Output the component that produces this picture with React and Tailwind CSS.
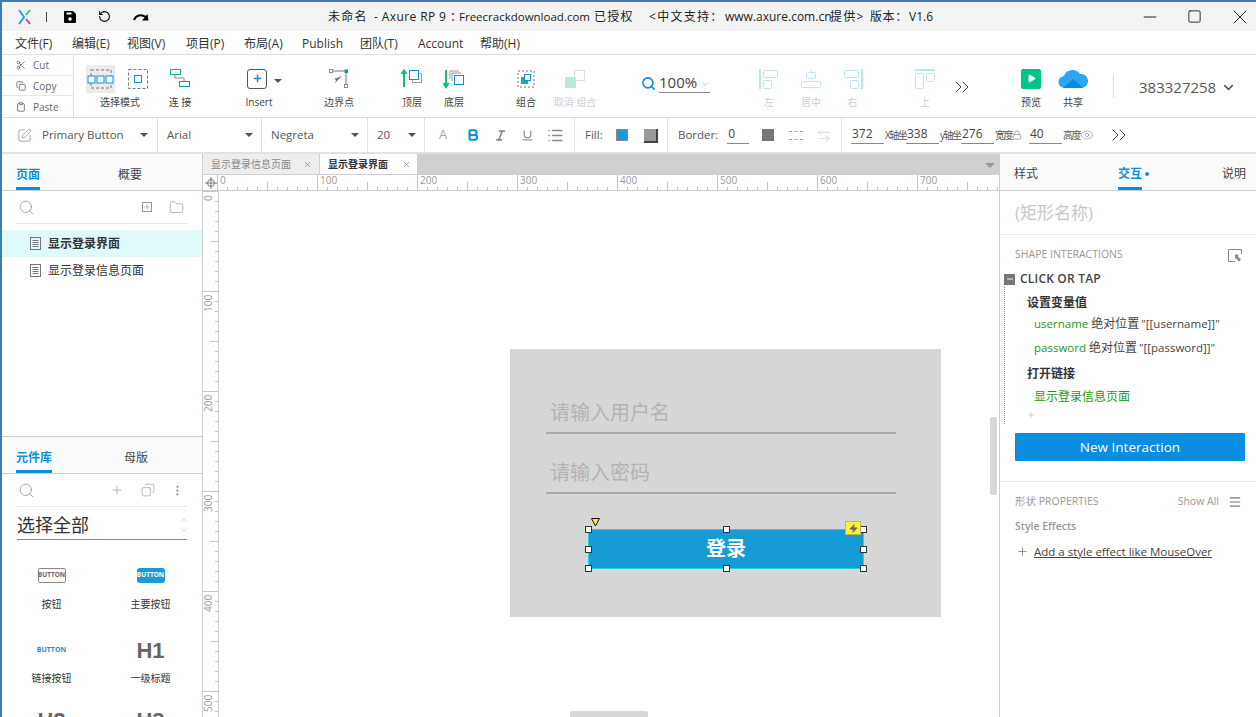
import { Scissors, Copy, Clipboard, Search, Plus, Folder, X, Minus, Square, ChevronDown, ChevronUp, ChevronsRight, RotateCcw, Lock, Eye, Play, EllipsisVertical, Menu, List, Bold, Italic, Underline, Zap, SquarePen } from "lucide-react";

const FONT = "font-['Open_Sans','Noto_Sans_CJK_SC',sans-serif]";

const MENUS = [
  ["文件(F)", "w-[57px]"],
  ["编辑(E)", "w-[55px]"],
  ["视图(V)", "w-[59px]"],
  ["项目(P)", "w-[58px]"],
  ["布局(A)", "w-[58px]"],
  ["Publish", "w-[58px]"],
  ["团队(T)", "w-[58px]"],
  ["Account", "w-[62px]"],
  ["帮助(H)", "w-[60px]"],
];

const TICKS = [0, 1, 2, 3, 4, 5, 6, 7, 8, 9];

function Caret({ className = "" }) {
  return <span className={`w-0 h-0 border-x-[4px] border-x-transparent border-t-[4px] border-t-[#555] ${className}`} />;
}

function ToolButton({ label, width, muted, children }) {
  return (
    <div className={`flex flex-col items-center shrink-0 ${width}`}>
      <div className="h-[31px] flex items-center justify-center">{children}</div>
      <div className={`mt-[1px] text-[10px] leading-[14px] whitespace-nowrap ${muted ? "text-[#d0d0d0]" : "text-[#444]"}`}>{label}</div>
    </div>
  );
}

function Underlined({ value, width }) {
  return <div className={`h-[18px] border-b border-[#888] text-[12px] leading-[16px] text-[#444] px-[1px] shrink-0 ${width}`}>{value}</div>;
}

function AxisLabel({ label, width }) {
  return <span className={`text-[10px] tracking-[-1.5px] whitespace-nowrap pl-[1px] shrink-0 ${width}`}>{label}</span>;
}

function Select({ label, width }) {
  return (
    <div className={`h-full flex items-center justify-between border-r border-[#e3e3e3] pl-[9px] pr-[8px] text-[11.5px] text-[#555] shrink-0 ${width}`}>
      <span>{label}</span>
      <Caret />
    </div>
  );
}

function PanelTabs({ tabs }) {
  return (
    <div className="h-[37px] flex items-stretch bg-[#fbfbfb] border-b border-[#cfcfcf] shrink-0">
      {tabs.map(([label, width, active]) => (
        <div key={label} className={`${width} flex items-stretch`}>
          <div className={`h-full pt-[12px] text-[12px] leading-[18px] whitespace-nowrap ${active ? "text-[#0b8ede] border-b-[3px] border-[#0b8ede] font-semibold" : "text-[#444]"}`}>{label}</div>
        </div>
      ))}
    </div>
  );
}

function DocIcon() {
  return (
    <svg width="11" height="13" viewBox="0 0 11 13" className="shrink-0">
      <rect x="0.5" y="0.5" width="10" height="12" fill="none" stroke="#777" />
      <path d="M2.5 3.5h6M2.5 5.5h6M2.5 7.5h6M2.5 9.5h6" stroke="#777" />
    </svg>
  );
}

function PageRow({ label, active }) {
  return (
    <div className={`h-[27px] flex items-center pl-[28px] gap-[7px] text-[12px] text-[#333] ${active ? "bg-[#e0f9f9] font-bold" : ""}`}>
      <DocIcon />
      <span>{label}</span>
    </div>
  );
}

function Widget({ label, children }) {
  return (
    <div className="h-[74px] flex flex-col items-center">
      <div className="h-[32px] flex items-center justify-center">{children}</div>
      {label && <div className="mt-[6px] text-[10px] leading-[14px] text-[#333]">{label}</div>}
    </div>
  );
}

function HorizontalRuler() {
  const marks = [0, 100, 200, 300, 400, 500, 600, 700];
  return (
    <div className="h-[16px] flex-1 flex overflow-hidden bg-white border-b border-[#cfcfcf] -ml-[2px]">
      {marks.map((m) => (
        <div key={m} className="relative w-[100px] shrink-0 h-full border-l border-[#c4c4c4] pl-[2px] text-[10px] leading-[11px] text-[#999]">
          {m}
          <div className="absolute inset-0 flex items-end">
            {TICKS.map((t) => (
              <span key={t} className={`w-[10px] shrink-0 border-r border-[#c4c4c4] ${t === 4 ? "h-[8px]" : "h-[3px]"}`} />
            ))}
          </div>
        </div>
      ))}
    </div>
  );
}

function VerticalRuler() {
  const marks = [0, 100, 200, 300, 400, 500];
  return (
    <div className="w-[16px] shrink-0 h-full overflow-hidden bg-white border-r border-[#cfcfcf] flex flex-col">
      {marks.map((m) => (
        <div key={m} className="relative h-[100px] shrink-0 border-t border-[#c4c4c4]">
          <div className="mt-[3px] h-[24px] text-right text-[10px] leading-[11px] text-[#999] [writing-mode:vertical-rl] rotate-180">{m}</div>
          <div className="absolute inset-0 flex flex-col items-end">
            {TICKS.map((t) => (
              <span key={t} className={`h-[10px] shrink-0 border-b border-[#c4c4c4] ${t === 4 ? "w-[8px]" : "w-[3px]"}`} />
            ))}
          </div>
        </div>
      ))}
    </div>
  );
}

function Handle({ className }) {
  return <span className={`absolute w-[7px] h-[7px] bg-white border border-[#333] ${className}`} />;
}

export default function App() {
  return (
    <div className={`w-[1256px] h-[717px] overflow-hidden bg-white flex flex-col border-l-2 border-t-2 border-[#3d7cb8] ${FONT}`}>
      {/* title bar */}
      <div className="h-[29px] shrink-0 bg-[#f3f3f3] flex items-center text-[12px] text-[#222]">
        <svg width="14" height="16" viewBox="0 0 14 16" className="ml-[16px]">
          <path d="M1 1 L6 8 L1 15" fill="none" stroke="#1aa7e0" strokeWidth="2" />
          <path d="M12 1 L8 6" fill="none" stroke="#35c48f" strokeWidth="2" />
          <path d="M8 10 L12 15" fill="none" stroke="#e8308c" strokeWidth="2" />
        </svg>
        <span className="ml-[14px] w-px h-[10px] bg-[#444]" />
        <svg width="12" height="12" viewBox="0 0 12 12" className="ml-[17px]">
          <path d="M0 1a1 1 0 0 1 1-1h8l3 3v8a1 1 0 0 1-1 1H1a1 1 0 0 1-1-1z" fill="#000" />
          <rect x="2.5" y="1.5" width="5" height="2" fill="#fff" />
          <circle cx="6" cy="8" r="1.8" fill="#fff" />
        </svg>
        <RotateCcw size={13} className="ml-[22px] text-black" strokeWidth={2} />
        <svg width="16" height="11" viewBox="0 0 16 11" className="ml-[22px]">
          <path d="M1 9C3 4 8 3 13 6" fill="none" stroke="#000" strokeWidth="2" />
          <path d="M15.5 9.5L9 9.5 14.5 3z" fill="#000" />
        </svg>
        <div className="ml-[179px] flex whitespace-nowrap">
          <span className="w-[46px] tracking-[1.3px]">未命名</span>
          <span className="w-[85px] tracking-[0.4px]">- Axure RP 9 ：</span>
          <span className="w-[135px] text-[11.5px]">Freecrackdownload.com</span>
          <span className="w-[55px] tracking-[1.3px]">已授权</span>
          <span className="w-[76px] tracking-[1.3px]">&lt;中文支持：</span>
          <span className="w-[105px]">www.axure.com.cn</span>
          <span className="w-[40px] tracking-[1.3px]">提供&gt;</span>
          <span className="w-[39px] tracking-[0.6px]">版本：</span>
          <span>V1.6</span>
        </div>
        <div className="ml-auto mr-[4px] flex items-center text-[#222]">
          <Minus size={20} strokeWidth={1.2} />
          <Square size={15} strokeWidth={1.5} className="ml-[27px]" />
          <X size={24} strokeWidth={1} className="ml-[26px]" />
        </div>
      </div>

      {/* menu */}
      <div className="h-[24px] shrink-0 flex items-center pl-[13px] pt-[2px] text-[12px] text-[#333] border-b border-[#dedede]">
        {MENUS.map(([label, width]) => (
          <span key={label} className={`${width} whitespace-nowrap`}>{label}</span>
        ))}
      </div>

      {/* toolbar */}
      <div className="h-[63px] shrink-0 flex items-stretch border-b border-[#dedede]">
        <div className="w-[72px] shrink-0 border-r border-[#dedede] flex flex-col text-[10px] text-[#666]">
          {[["Cut", Scissors], ["Copy", Copy], ["Paste", Clipboard]].map(([label, Icon], i) => (
            <div key={label} className={`h-[21px] flex items-center pl-[14px] pt-[1px] gap-[7px] ${i < 2 ? "border-b border-[#e6e6e6]" : ""}`}>
              <Icon size={10} />
              <span>{label}</span>
            </div>
          ))}
        </div>
        <div className="flex items-start pt-[8px]">
          <ToolButton label="选择模式" width="w-[92px]">
            <div className="flex items-center gap-[13px] mr-[6px]">
              <div className="w-[29px] h-[28px] bg-[#ececec] flex items-center justify-center">
                <svg width="28" height="20" viewBox="0 0 28 20"><rect x="4" y="1" width="20" height="18" fill="none" stroke="#777" strokeDasharray="3 2"/><rect x="1" y="7" width="7" height="7" fill="#fff" stroke="#0b8ede"/><rect x="10" y="7" width="7" height="7" fill="#fff" stroke="#0b8ede"/><rect x="19" y="7" width="7" height="7" fill="#fff" stroke="#0b8ede"/></svg>
              </div>
              <svg width="20" height="20" viewBox="0 0 20 20"><rect x="0.5" y="0.5" width="19" height="19" fill="none" stroke="#777" strokeDasharray="3 2"/><rect x="6.5" y="6.5" width="7" height="7" fill="#fff" stroke="#0b8ede"/></svg>
            </div>
          </ToolButton>
          <ToolButton label="连 接" width="w-[28px]">
            <svg width="20" height="20" viewBox="0 0 20 20"><rect x="0.5" y="0.5" width="10" height="5" fill="none" stroke="#11b98c"/><rect x="9.5" y="12.5" width="10" height="5" fill="none" stroke="#0b8ede"/><path d="M5 6v3h9v3" fill="none" stroke="#888"/></svg>
          </ToolButton>
          <ToolButton label="Insert" width="w-[130px]">
            <div className="flex items-center gap-[7px] ml-[11px]">
              <div className="w-[20px] h-[20px] border border-[#555] rounded-[3px] flex items-center justify-center"><Plus size={11} strokeWidth={3} className="text-[#0b8ede]" /></div>
              <Caret className="mt-[5px]" />
            </div>
          </ToolButton>
          <ToolButton label="边界点" width="w-[30px]">
            <svg width="20" height="20" viewBox="0 0 20 20"><path d="M3 2H17V17" fill="none" stroke="#777"/><rect x="0.5" y="0.5" width="3" height="3" fill="#fff" stroke="#888"/><rect x="15.5" y="0.5" width="3.5" height="3.5" fill="#0b8ede"/><rect x="15.5" y="15.5" width="3" height="3" fill="#fff" stroke="#888"/><path d="M13 7L5 10l2 1-1 3z" fill="#777"/></svg>
          </ToolButton>
          <ToolButton label="顶层" width="w-[42px] ml-[37px]">
            <svg width="22" height="20" viewBox="0 0 22 20"><path d="M3 18V3M0.5 5L3 1.5 5.5 5" fill="none" stroke="#11b98c" strokeWidth="2"/><rect x="8.5" y="1.5" width="9" height="9" fill="#fff" stroke="#0b8ede"/><path d="M18.5 4.5h2v9h-9v-2" fill="none" stroke="#999"/></svg>
          </ToolButton>
          <ToolButton label="底层" width="w-[42px]">
            <svg width="22" height="20" viewBox="0 0 22 20"><path d="M3 1V16M0.5 14L3 18 5.5 14" fill="none" stroke="#11b98c" strokeWidth="2"/><path d="M7 10V2h9M9 12V4h9" fill="none" stroke="#999"/><rect x="11.5" y="6.5" width="9" height="9" fill="#fff" stroke="#0b8ede"/></svg>
          </ToolButton>
          <ToolButton label="组合" width="w-[40px] ml-[31px]">
            <svg width="20" height="20" viewBox="0 0 20 20"><rect x="2" y="2" width="16" height="16" fill="none" stroke="#777" strokeDasharray="2 2"/><rect x="5" y="8" width="7" height="7" fill="#11b98c"/><rect x="8.5" y="5.5" width="6" height="6" fill="#fff" stroke="#0b8ede"/></svg>
          </ToolButton>
          <ToolButton label="取消 组合" width="w-[58px]" muted>
            <svg width="22" height="20" viewBox="0 0 22 20"><rect x="10.5" y="1.5" width="10" height="10" fill="none" stroke="#ddd"/><rect x="1" y="8" width="11" height="11" fill="#b8ecd8"/></svg>
          </ToolButton>
        </div>
        <div className="flex items-start pt-[17px] ml-[37px]">
          <Search size={15} strokeWidth={2.5} className="text-[#0b8ede] mt-[4px]" />
          <div className="ml-[3px] w-[51px] h-[21px] border-b border-[#888] text-[15px] leading-[19px] text-[#444] flex items-center justify-between">
            <span>100%</span>
            <ChevronDown size={10} className="text-[#bbb] mt-[3px]" />
          </div>
        </div>
        <div className="flex items-start pt-[8px] ml-[38px]">
          <ToolButton label="左" width="w-[42px]" muted>
            <svg width="20" height="20" viewBox="0 0 20 20"><path d="M1 0V20" stroke="#b7eadc" strokeWidth="2"/><rect x="4.5" y="1.5" width="14" height="7" rx="1" fill="none" stroke="#bfe3f7"/><rect x="4.5" y="11.5" width="8" height="8" rx="1" fill="none" stroke="#bfe3f7"/></svg>
          </ToolButton>
          <ToolButton label="居中" width="w-[42px]" muted>
            <svg width="20" height="20" viewBox="0 0 20 20"><path d="M10 0V20" stroke="#b7eadc"/><rect x="5.5" y="3.5" width="9" height="6" rx="1" fill="#fff" stroke="#bfe3f7"/><rect x="0.5" y="12.5" width="19" height="6" rx="1" fill="#fff" stroke="#bfe3f7"/></svg>
          </ToolButton>
          <ToolButton label="右" width="w-[41px]" muted>
            <svg width="20" height="20" viewBox="0 0 20 20"><path d="M19 0V20" stroke="#b7eadc" strokeWidth="2"/><rect x="1.5" y="1.5" width="14" height="7" rx="1" fill="none" stroke="#bfe3f7"/><rect x="7.5" y="11.5" width="8" height="8" rx="1" fill="none" stroke="#bfe3f7"/></svg>
          </ToolButton>
          <ToolButton label="上" width="w-[42px] ml-[31px]" muted>
            <svg width="20" height="20" viewBox="0 0 20 20"><path d="M0 1H20" stroke="#b7eadc" strokeWidth="2"/><rect x="0.5" y="4.5" width="8" height="15" rx="1" fill="none" stroke="#bfe3f7"/><rect x="11.5" y="4.5" width="8" height="8" rx="1" fill="none" stroke="#bfe3f7"/></svg>
          </ToolButton>
          <ChevronsRight size={24} strokeWidth={1} className="text-[#444] mt-[12px] ml-[4px] shrink-0" />
          <ToolButton label="预览" width="w-[42px] ml-[36px]">
            <div className="w-[20px] h-[20px] bg-[#00c389] rounded-[2px] flex items-center justify-center"><Play size={9} fill="white" stroke="white" /></div>
          </ToolButton>
          <ToolButton label="共享" width="w-[42px]">
            <svg width="30" height="20" viewBox="0 0 30 20"><path d="M7 19a6 6 0 0 1-1-12 9 9 0 0 1 16-2 6 6 0 0 1 2 14z" fill="#2aa6f2"/><path d="M5 19l10-9 10 9z" fill="#0a8ae0"/></svg>
          </ToolButton>
          <span className="ml-[19px] mt-[11px] w-px h-[24px] bg-[#dedede] shrink-0" />
          <div className="ml-[25px] mt-[14px] flex items-center text-[15px] leading-[20px] text-[#555] gap-[5px] whitespace-nowrap">
            <span>383327258</span>
            <ChevronDown size={15} strokeWidth={2.5} className="text-[#555]" />
          </div>
        </div>
      </div>

      {/* format bar */}
      <div className="h-[36px] shrink-0 flex items-center border-b-2 border-[#e2e2e2] text-[11.5px] text-[#555]">
        <div className="h-full w-[156px] flex items-center justify-between pl-[15px] pr-[9px] border-r border-[#e3e3e3] shrink-0">
          <SquarePen size={15} strokeWidth={1} className="text-[#777]" />
          <span className="ml-[10px] mr-auto">Primary Button</span>
          <Caret />
        </div>
        <Select label="Arial" width="w-[104px]" />
        <Select label="Negreta" width="w-[106px]" />
        <Select label="20" width="w-[57px]" />
        <div className="h-full w-[150px] shrink-0 flex items-center border-r border-[#e3e3e3] pl-[14px] text-[#aaa]">
          <span className="text-[13px] w-[27px]">A</span>
          <Bold size={14} strokeWidth={3.5} className="text-[#0b8ede]" />
          <Italic size={13} strokeWidth={3} className="ml-[14px] text-[#888]" />
          <Underline size={13} strokeWidth={2.5} className="ml-[14px] text-[#999]" />
          <List size={17} strokeWidth={2} className="ml-[13px] text-[#888]" />
        </div>
        <div className="h-full w-[93px] shrink-0 flex items-center border-r border-[#e3e3e3] pl-[10px]">
          <span>Fill:</span>
          <span className="ml-[13px] w-[12px] h-[12px] bg-[#1a9bd7] border border-[#8a8a8a]" />
          <span className="ml-[16px] w-[12px] h-[12px] bg-[#999] shadow-[1px_1px_0_1px_#444]" />
        </div>
        <div className="h-full w-[174px] shrink-0 flex items-center border-r border-[#e3e3e3] pl-[10px]">
          <span>Border:</span>
          <Underlined value="0" width="ml-[9px] w-[22px]" />
          <span className="ml-[13px] w-[12px] h-[12px] bg-[#777]" />
          <span className="ml-[15px] w-[14px] h-[9px] border-y border-[#aaa] border-dashed" />
          <span className="ml-[14px] text-[#ddd] text-[13px] leading-none">⇆</span>
        </div>
        <div className="flex items-center pl-[9px]">
          <Underlined value="372" width="w-[33px]" />
          <AxisLabel label="X轴坐" width="w-[22px]" />
          <Underlined value="338" width="w-[33px]" />
          <AxisLabel label="y轴坐" width="w-[22px]" />
          <Underlined value="276" width="w-[33px]" />
          <AxisLabel label="宽度" width="w-[18px]" />
          <Lock size={10} className="text-[#999] mr-[7px] shrink-0" />
          <Underlined value="40" width="w-[33px]" />
          <AxisLabel label="高度" width="w-[18px]" />
          <Eye size={14} strokeWidth={1} className="text-[#888] shrink-0" />
          <ChevronsRight size={24} strokeWidth={1} className="ml-[13px] text-[#444] shrink-0" />
        </div>
      </div>

      {/* workspace */}
      <div className="flex-1 min-h-0 flex">
        {/* left */}
        <div className="w-[201px] shrink-0 flex flex-col border-r border-[#cfcfcf]">
          <div className="h-[283px] shrink-0 flex flex-col border-b border-[#cfcfcf]">
            <PanelTabs tabs={[["页面", "w-[116px] pl-[14px]", true], ["概要", "w-[80px]"]]} />
            <div className="h-[33px] mx-[15px] flex items-center border-b border-[#e6e6e6] text-[#888]">
              <Search size={17} strokeWidth={1} className="ml-[1px]" />
              <span className="ml-auto w-[10px] h-[10px] border border-[#999] flex items-center justify-center"><Plus size={8} strokeWidth={1.5} /></span>
              <Folder size={15} strokeWidth={1} className="ml-[17px] mr-[3px]" />
            </div>
            <div className="mt-[6px]">
              <PageRow label="显示登录界面" active />
              <PageRow label="显示登录信息页面" />
            </div>
          </div>
          <div className="flex-1 min-h-0 overflow-hidden">
            <PanelTabs tabs={[["元件库", "w-[122px] pl-[14px]", true], ["母版", "w-[60px]"]]} />
            <div className="h-[33px] mx-[15px] flex items-center border-b border-[#e6e6e6] text-[#888]">
              <Search size={17} strokeWidth={1} className="ml-[1px]" />
              <Plus size={14} strokeWidth={1} className="ml-auto mr-[1px]" />
              <Copy size={14} strokeWidth={1} className="ml-[16px] -scale-x-100" />
              <EllipsisVertical size={13} strokeWidth={2} className="ml-[16px] mr-[3px]" />
            </div>
            <div className="mx-[15px] h-[33px] pt-[4px] flex items-center justify-between border-b border-[#888] text-[18px] text-[#333]">
              <span>选择全部</span>
              <div className="flex flex-col text-[#ccc] mr-[-2px]"><ChevronUp size={10} /><ChevronDown size={10} /></div>
            </div>
            <div className="grid grid-cols-2 mt-[19px] pr-[2px]">
              <Widget label="按钮">
                <div className="w-[28px] h-[15px] border border-[#888] rounded-[2px] text-[6.5px] font-bold text-[#666] flex items-center justify-center">BUTTON</div>
              </Widget>
              <Widget label="主要按钮">
                <div className="w-[28px] h-[15px] bg-[#1a9bd7] rounded-[3px] text-[6.5px] font-bold text-white flex items-center justify-center">BUTTON</div>
              </Widget>
              <Widget label="链接按钮">
                <div className="w-[28px] h-[15px] mt-[2px] text-[7px] font-bold text-[#3a84cc] flex items-center justify-center">BUTTON</div>
              </Widget>
              <Widget label="一级标题">
                <div className="mt-[3px] text-[22px] leading-none font-bold text-[#666] font-['Liberation_Sans',sans-serif]">H1</div>
              </Widget>
              <Widget>
                <div className="-mt-[5px] text-[22px] leading-none font-bold text-[#666] font-['Liberation_Sans',sans-serif]">H2</div>
              </Widget>
              <Widget>
                <div className="-mt-[5px] text-[22px] leading-none font-bold text-[#666] font-['Liberation_Sans',sans-serif]">H3</div>
              </Widget>
            </div>
          </div>
        </div>

        {/* center */}
        <div className="flex-1 min-w-0 flex flex-col">
          <div className="h-[21px] shrink-0 flex bg-[#d0d0d0] border-b border-[#cfcfcf] text-[10px]">
            <div className="w-[117px] flex items-center justify-between pl-[8px] pr-[7px] bg-[#ededed] text-[#888] border-r border-[#cfcfcf]">
              <span>显示登录信息页面</span><X size={9} />
            </div>
            <div className="w-[97px] flex items-center justify-between pl-[8px] pr-[6px] bg-white text-[#333] font-semibold">
              <span>显示登录界面</span><X size={9} className="text-[#888]" />
            </div>
            <span className="ml-auto mr-[4px] mt-[9px] w-0 h-0 border-x-[5px] border-x-transparent border-t-[5px] border-t-[#999]" />
          </div>
          <div className="flex shrink-0">
            <div className="w-[16px] h-[16px] shrink-0 flex items-center justify-center border-r border-b border-[#cfcfcf]">
              <svg width="12" height="12" viewBox="0 0 12 12">
                <circle cx="6" cy="6" r="3.5" fill="none" stroke="#777" />
                <path d="M6 0V12M0 6H12" stroke="#777" />
              </svg>
            </div>
            <HorizontalRuler />
          </div>
          <div className="flex-1 min-h-0 flex">
            <VerticalRuler />
            <div className="relative flex-1 bg-white">
              <div className="absolute left-[291px] top-[158px] w-[431px] h-[268px] bg-[#d6d6d6] font-['Noto_Sans_CJK_SC',sans-serif]">
                <div className="absolute left-[36px] top-[49px] w-[350px] h-[36px] border-b-2 border-[#aaa] pl-[4px] text-[20px] leading-[27px] text-[#b3b3b3]">请输入用户名</div>
                <div className="absolute left-[36px] top-[109px] w-[350px] h-[36px] border-b-2 border-[#aaa] pl-[4px] text-[20px] leading-[27px] text-[#b3b3b3]">请输入密码</div>
                <div className="absolute left-[78px] top-[180px] w-[276px] h-[40px] pb-[2px] bg-[#179bd7] border border-[#1fd3e0] text-white font-bold text-[20px] flex items-center justify-center">
                  登录
                  <Handle className="-left-[4px] -top-[4px]" />
                  <Handle className="left-[134px] -top-[4px]" />
                  <Handle className="-right-[4px] -top-[4px]" />
                  <Handle className="-left-[4px] top-[16px]" />
                  <Handle className="-right-[4px] top-[16px]" />
                  <Handle className="-left-[4px] -bottom-[4px]" />
                  <Handle className="left-[134px] -bottom-[4px]" />
                  <Handle className="-right-[4px] -bottom-[4px]" />
                  <svg width="9" height="9" viewBox="0 0 9 9" className="absolute left-[2px] -top-[12px]">
                    <path d="M0.5 0.5H8.5L4.5 8z" fill="#ffe92e" stroke="#111" />
                  </svg>
                  <span className="absolute right-[2px] -top-[9px] w-[16px] h-[14px] bg-[#fff23a] border border-[#c0b84a] flex items-center justify-center"><Zap size={9} fill="#666" stroke="#666" /></span>
                </div>
              </div>
              <div className="absolute right-[2px] top-[226px] w-[7px] h-[78px] bg-[#d8d8d8] rounded-[2px]" />
              <div className="absolute left-[351px] bottom-0 w-[78px] h-[6px] bg-[#d8d8d8] rounded-t-[2px]" />
            </div>
          </div>
        </div>

        {/* right */}
        <div className="w-[257px] shrink-0 flex flex-col border-l border-[#cfcfcf]">
          <div className="h-[37px] shrink-0 flex items-stretch bg-[#fbfbfb] border-b border-[#cfcfcf] pl-[14px] pr-[10px] text-[12px] text-[#444]">
            <span className="pt-[11px] leading-[18px]">样式</span>
            <span className="relative ml-[80px] h-full pt-[11px] leading-[18px] font-semibold text-[#0b8ede] border-b-[3px] border-[#0b8ede]">
              交互
              <span className="absolute -right-[7px] top-[18px] w-[4px] h-[4px] rounded-full bg-[#0b8ede]" />
            </span>
            <span className="pt-[11px] leading-[18px] ml-auto">说明</span>
          </div>
          <div className="h-[44px] shrink-0 flex items-center pl-[15px] text-[17px] text-[#c8c8c8] border-b border-[#e6e6e6]">(矩形名称)</div>
          <div className="h-[36px] shrink-0 flex items-center justify-between pl-[15px] pr-[14px] pt-[4px] text-[10.5px] text-[#999]">
            <span>SHAPE INTERACTIONS</span>
            <svg width="14" height="13" viewBox="0 0 14 13">
              <path d="M7 12.5H0.5V0.5H13.5V5" fill="none" stroke="#888" />
              <path d="M7 5.5h4l-1.5 1.5 3.5 3.5-2 2L8 9l-1 1.5z" fill="#888" />
            </svg>
          </div>
          <div className="flex items-center h-[16px] pl-[4px] text-[12px] font-semibold text-[#444] tracking-[0.2px]">
            <span className="w-[11px] h-[11px] bg-[#777] text-white flex items-center justify-center"><Minus size={8} strokeWidth={3} /></span>
            <span className="ml-[5px]">CLICK OR TAP</span>
          </div>
          <div className="ml-[4px] border-l border-dotted border-[#888] h-[137px] pl-[22px] text-[11.5px] text-[#444]">
            <div className="pt-[7px] h-[25px] font-semibold text-[#333] text-[12px] leading-[18px]">设置变量值</div>
            <div className="h-[24px] pl-[7px] flex items-center whitespace-nowrap"><span className="text-[#1a9a1a] mr-[3px]">username</span><span className="text-[12px] mr-[2px]">绝对位置</span>"[[username]]"</div>
            <div className="h-[24px] pl-[7px] flex items-center whitespace-nowrap"><span className="text-[#1a9a1a] mr-[3px]">password</span><span className="text-[12px] mr-[2px]">绝对位置</span>"[[password]]"</div>
            <div className="h-[28px] flex items-center font-semibold text-[#333] text-[12px]">打开链接</div>
            <div className="h-[17px] pl-[7px] flex items-center text-[#1a9a1a] text-[12px]">显示登录信息页面</div>
            <Plus size={10} strokeWidth={1} className="-ml-[1px] mt-[5px] text-[#999]" />
          </div>
          <div className="mt-[9px] ml-[15px] mr-[11px] h-[28px] shrink-0 bg-[#0b8ee0] rounded-[1px] flex items-center justify-center text-white text-[13.5px]">New Interaction</div>
          <div className="mt-[20px] border-t border-[#e6e6e6] h-[38px] flex items-center justify-between pl-[15px] pr-[14px] pt-[2px] text-[10.5px] text-[#999]">
            <span>形状 PROPERTIES</span>
            <span className="flex items-center gap-[9px]">Show All <Menu size={14} strokeWidth={2} className="text-[#777]" /></span>
          </div>
          <div className="pl-[15px] text-[10.5px] font-semibold text-[#999] leading-[14px]">Style Effects</div>
          <div className="pl-[16px] mt-[10px] flex items-center text-[11.5px] text-[#444] gap-[5px]">
            <Plus size={13} strokeWidth={1} />
            <span className="underline">Add a style effect like MouseOver</span>
          </div>
        </div>
      </div>
    </div>
  );
}
